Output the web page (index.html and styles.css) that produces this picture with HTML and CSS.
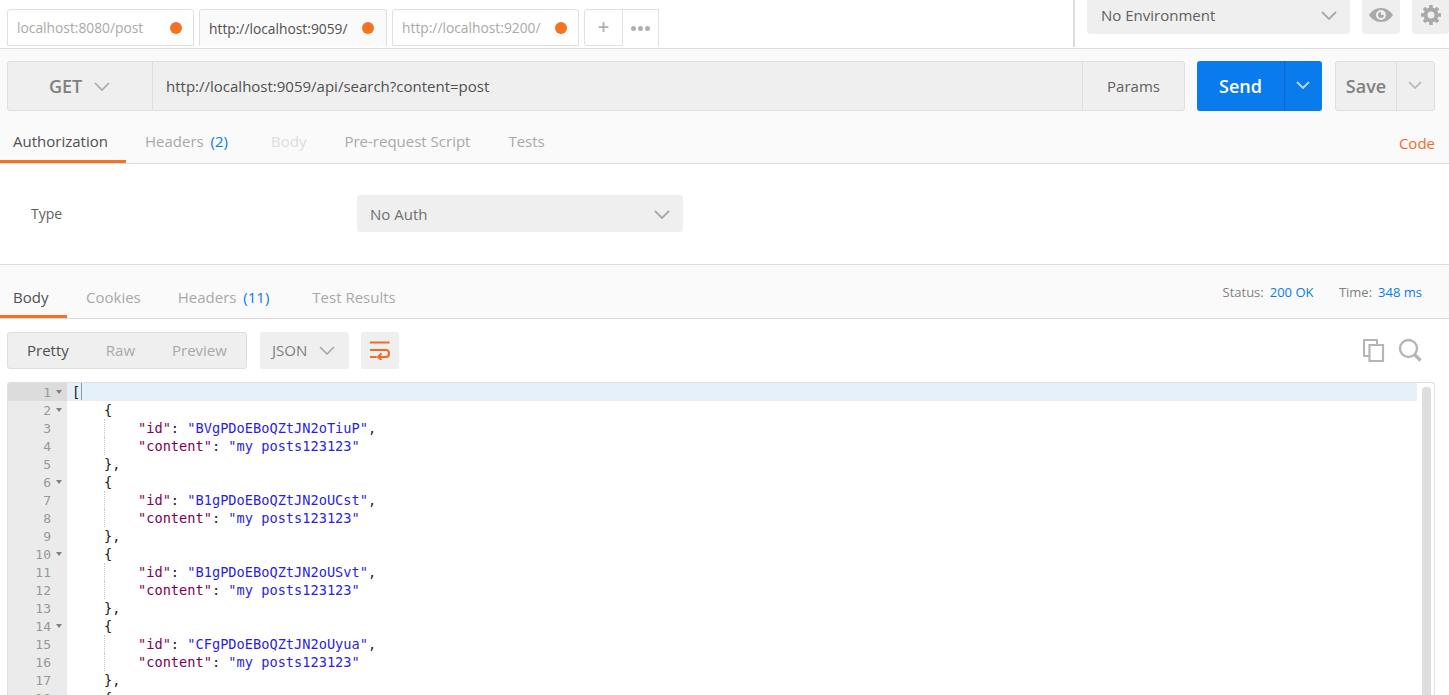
FILE: index.html
```html
<!DOCTYPE html>
<html lang="en">
<head>
<meta charset="utf-8">
<title>Postman</title>
<link rel="stylesheet" href="styles.css">
</head>
<body>
<header class="topbar">
  <div class="tabs">
    <div class="tab first"><span class="tab-label dim">localhost:8080/post</span><i class="dot"></i></div>
    <div class="tab active"><span class="tab-label">http://localhost:9059/</span><i class="dot"></i></div>
    <div class="tab"><span class="tab-label dim">http://localhost:9200/</span><i class="dot"></i></div>
    <div class="tab-actions">
      <div class="tab-add">+</div>
      <div class="tab-more"><i></i><i></i><i></i></div>
    </div>
  </div>
  <div class="env">
    <div class="env-select"><span>No Environment</span>
      <svg class="chev" width="16" height="9" viewBox="0 0 16 9"><path d="M1 1l7 7 7-7" fill="none" stroke="#a9a9a9" stroke-width="1.8"/></svg>
    </div>
    <div class="icon-btn eye">
      <svg width="26" height="16" viewBox="0 0 26 16"><path fill-rule="evenodd" d="M13 1C7.5 1 3 4.5 1 8c2 3.500 6.500 7 12 7s10-3.500 12-7c-2-3.500-6.500-7-12-7zm0 2a5 5 0 1 1 0 10 5 5 0 0 1 0-10z" fill="#a9a9a9"/><path fill-rule="evenodd" d="M13 5a3 3 0 1 0 3 3h-3z" fill="#a9a9a9"/></svg>
    </div>
    <div class="icon-btn gear">
      <svg width="22" height="22" viewBox="0 0 22 22"><circle cx="11" cy="11" r="5.500" fill="none" stroke="#a9a9a9" stroke-width="4"/><path d="M11 1v20M1 11h20M3.900 3.900l14.200 14.200M18.100 3.900L3.900 18.100" stroke="#a9a9a9" stroke-width="3.600" stroke-dasharray="4 12 4"/></svg>
    </div>
  </div>
</header>

<section class="request">
  <div class="url-row">
    <div class="url-box">
      <div class="method"><span>GET</span>
        <svg width="16" height="9" viewBox="0 0 16 9"><path d="M1 1l7 7 7-7" fill="none" stroke="#a9a9a9" stroke-width="1.700"/></svg>
      </div>
      <div class="url">http://localhost:9059/api/search?content=post</div>
      <div class="params">Params</div>
    </div>
    <div class="send">
      <span class="send-label">Send</span>
      <span class="send-arrow"><svg width="14" height="8" viewBox="0 0 14 8"><path d="M1 1l6 6 6-6" fill="none" stroke="#b9d4ee" stroke-width="1.900"/></svg></span>
    </div>
    <div class="save">
      <span class="save-label">Save</span>
      <span class="save-arrow"><svg width="14" height="8" viewBox="0 0 14 8"><path d="M1 1l6 6 6-6" fill="none" stroke="#b5b5b5" stroke-width="1.700"/></svg></span>
    </div>
  </div>
  <nav class="req-tabs">
    <span class="rt on">Authorization</span>
    <span class="rt">Headers <b>(2)</b></span>
    <span class="rt faint">Body</span>
    <span class="rt">Pre-request Script</span>
    <span class="rt">Tests</span>
    <span class="code-link">Code</span>
  </nav>
</section>

<section class="auth">
  <span class="auth-label">Type</span>
  <div class="auth-select"><span>No Auth</span>
    <svg width="16" height="9" viewBox="0 0 16 9"><path d="M1 1l7 7 7-7" fill="none" stroke="#a9a9a9" stroke-width="1.800"/></svg>
  </div>
</section>

<section class="res-head">
  <nav class="res-tabs">
    <span class="st on">Body</span>
    <span class="st">Cookies</span>
    <span class="st">Headers <b>(11)</b></span>
    <span class="st">Test Results</span>
  </nav>
  <div class="meta">
    <span class="k">Status:</span><span class="v">200 OK</span>
    <span class="k second">Time:</span><span class="v">348 ms</span>
  </div>
</section>

<section class="toolbar">
  <div class="segment"><span class="cur">Pretty</span><span>Raw</span><span>Preview</span></div>
  <div class="format"><span>JSON</span>
    <svg width="16" height="9" viewBox="0 0 16 9"><path d="M1 1l7 7 7-7" fill="none" stroke="#a9a9a9" stroke-width="1.700"/></svg>
  </div>
  <div class="wrap">
    <svg width="20" height="19" viewBox="0 0 20 19"><path d="M0 1.500h19.500M0 9h16c4 0 4 7 0 7H8M0 16h6.500" fill="none" stroke="#f26b26" stroke-width="2.100"/><path d="M11.500 12.500L8 16l3.500 3" fill="none" stroke="#f26b26" stroke-width="2"/></svg>
  </div>
  <div class="tools">
    <svg width="24" height="24" viewBox="0 0 24 24"><path d="M7 18H2V2h13v5" fill="none" stroke="#b5b5b5" stroke-width="2"/><path d="M7.500 7h13.500v16H7.500z" fill="none" stroke="#b5b5b5" stroke-width="2.200"/></svg>
    <svg width="24" height="24" viewBox="0 0 24 24"><circle cx="10.500" cy="10.500" r="8.500" fill="none" stroke="#b5b5b5" stroke-width="2.400"/><path d="M16.500 16.500l6 6" stroke="#b5b5b5" stroke-width="3.200"/></svg>
  </div>
</section>

<section class="editor">
  <div class="gutter">
    <div class="ln cur">1<i></i></div><div class="ln">2<i></i></div><div class="ln">3</div><div class="ln">4</div><div class="ln">5</div>
    <div class="ln">6<i></i></div><div class="ln">7</div><div class="ln">8</div><div class="ln">9</div><div class="ln">10<i></i></div>
    <div class="ln">11</div><div class="ln">12</div><div class="ln">13</div><div class="ln">14<i></i></div><div class="ln">15</div>
    <div class="ln">16</div><div class="ln">17</div><div class="ln">18</div>
  </div>
  <div class="lines">
    <div class="cl hl">[<span class="caret"></span></div>
    <div class="cl"><span class="ind1">{</span></div>
    <div class="cl guide"><span class="ind2"><em>"id"</em>: <u>"BVgPDoEBoQZtJN2oTiuP"</u>,</span></div>
    <div class="cl guide"><span class="ind2"><em>"content"</em>: <u>"my posts123123"</u></span></div>
    <div class="cl"><span class="ind1">},</span></div>
    <div class="cl"><span class="ind1">{</span></div>
    <div class="cl guide"><span class="ind2"><em>"id"</em>: <u>"B1gPDoEBoQZtJN2oUCst"</u>,</span></div>
    <div class="cl guide"><span class="ind2"><em>"content"</em>: <u>"my posts123123"</u></span></div>
    <div class="cl"><span class="ind1">},</span></div>
    <div class="cl"><span class="ind1">{</span></div>
    <div class="cl guide"><span class="ind2"><em>"id"</em>: <u>"B1gPDoEBoQZtJN2oUSvt"</u>,</span></div>
    <div class="cl guide"><span class="ind2"><em>"content"</em>: <u>"my posts123123"</u></span></div>
    <div class="cl"><span class="ind1">},</span></div>
    <div class="cl"><span class="ind1">{</span></div>
    <div class="cl guide"><span class="ind2"><em>"id"</em>: <u>"CFgPDoEBoQZtJN2oUyua"</u>,</span></div>
    <div class="cl guide"><span class="ind2"><em>"content"</em>: <u>"my posts123123"</u></span></div>
    <div class="cl"><span class="ind1">},</span></div>
    <div class="cl"><span class="ind1">{</span></div>
  </div>
  <div class="scroll"><i></i></div>
</section>
</body>
</html>
```
FILE: styles.css
```css
* { box-sizing: border-box; }
html, body { margin: 0; height: 695px; overflow: hidden; }
body { background: #fff; font-family: "Open Sans", "Liberation Sans", sans-serif; font-size: 15px; color: #808080; }

.topbar { height: 49px; border-bottom: 1px solid #dcdcdc; display: flex; justify-content: space-between; }
.tabs { display: flex; padding: 9px 0 0 7px; gap: 5px; align-items: flex-start; }
.tab { width: 187px; height: 37px; border: 1px solid #e0e0e0; border-radius: 3px 3px 0 0; display: flex; align-items: center; padding: 0 4px 0 9px; background: #fff; }
.tab.active { width: 188px; background: #fafafa; border-bottom: none; }
.tab-label { font-size: 13.800px; width: 139px; overflow: hidden; white-space: nowrap; color: #505050; margin-right: 14px; flex: none; }
.tab-label.dim { color: #a9a9a9; }
.dot { width: 12px; height: 12px; border-radius: 50%; background: #f47321; flex: none; }
.tab-actions { display: flex; }
.tab-add { width: 39px; height: 37px; border: 1px solid #e0e0e0; border-radius: 3px 0 0 3px; text-align: center; font-size: 20px; line-height: 34px; color: #b0b0b0; font-weight: 600; }
.tab-more { width: 36px; height: 37px; border: 1px solid #e0e0e0; border-left: none; border-bottom: none; display: flex; align-items: center; justify-content: center; gap: 2px; }
.tab-more i { width: 5px; height: 5px; border-radius: 50%; background: #b0b0b0; }

.env { display: flex; border-left: 2px solid #dcdcdc; height: 47px; padding-left: 12px; width: 376px; flex: none; align-items: flex-start; }
.env-select { width: 263px; height: 34px; background: #efefef; border-radius: 0 0 4px 4px; display: flex; align-items: center; justify-content: space-between; padding: 0 13px 4px 14px; color: #606060; }
.icon-btn { height: 34px; background: #efefef; border-radius: 0 0 4px 4px; display: flex; align-items: center; justify-content: center; }
.eye { width: 38px; margin-left: 12px; padding-bottom: 4px; }
.gear { width: 37px; margin-left: 12px; padding-bottom: 4px; }

.request { background: #fafafa; height: 115px; border-bottom: 1px solid #dcdcdc; }
.url-row { display: flex; padding: 12px 0 0 7px; height: 62px; }
.url-box { width: 1178px; height: 50px; border: 1px solid #dedede; border-radius: 3px; background: #efefef; display: flex; }
.method { width: 145px; border-right: 1px solid #dedede; display: flex; align-items: center; padding-left: 41px; gap: 12px; font-size: 18px; font-weight: 600; color: #808080; }
.url { flex: 1; padding-left: 13px; line-height: 48px; color: #505050; }
.params { width: 102px; border-left: 1px solid #dedede; text-align: center; line-height: 48px; color: #606060; }
.send { width: 125px; height: 50px; margin-left: 12px; background: #097bed; border-radius: 3px; display: flex; color: #fff; }
.send-label { width: 87px; text-align: center; line-height: 50px; font-size: 18px; font-weight: 600; }
.send-arrow { flex: 1; border-left: 1px solid #0265c8; display: flex; align-items: center; justify-content: center; padding: 0 2px 3px 0; }
.save { width: 100px; height: 50px; margin-left: 13px; border: 1px solid #dedede; border-radius: 3px; background: #efefef; display: flex; }
.save-label { width: 60px; text-align: center; line-height: 48px; font-size: 18px; font-weight: 600; color: #808080; }
.save-arrow { flex: 1; border-left: 1px solid #dedede; display: flex; align-items: center; justify-content: center; padding: 0 2px 3px 0; }

.req-tabs { display: flex; height: 52px; align-items: flex-start; }
.rt { height: 52px; padding: 19px 19px 0; color: #a9a9a9; line-height: 22px; }
.rt.on { width: 126px; padding: 19px 0 0 13px; color: #505050; border-bottom: 3px solid #f47321; }
.rt b { font-weight: 400; color: #097bed; margin: 0 5px 0 3px; }
.rt.faint { color: #dcdcdc; }
.code-link { margin-left: auto; margin-right: 14px; margin-top: 21px; color: #f26b26; line-height: 22px; }

.auth { height: 101px; border-bottom: 1px solid #dcdcdc; display: flex; padding: 31px 0 0 31px; align-items: flex-start; }
.auth-label { width: 326px; line-height: 38px; color: #606060; font-size: 14px; }
.auth-select { width: 326px; height: 37px; background: #efefef; border-radius: 3px; display: flex; align-items: center; justify-content: space-between; padding: 1px 13px 0; color: #707070; }

.res-head { height: 54px; background: #fafafa; border-bottom: 1px solid #dcdcdc; display: flex; justify-content: space-between; }
.res-tabs { display: flex; }
.st { height: 53px; padding: 21px 18px 0 19px; color: #a9a9a9; line-height: 22px; }
.st.on { width: 67px; padding: 21px 0 0 13px; color: #505050; border-bottom: 3px solid #f47321; }
.st b { font-weight: 400; color: #097bed; margin: 0 6px 0 3px; }
.meta { padding: 18px 27px 0 0; font-size: 13px; line-height: 18px; color: #808080; }
.meta .v { color: #097bed; margin-left: 6px; }
.meta .second { margin-left: 22px; }

.toolbar { height: 63px; display: flex; padding: 13px 0 0 7px; align-items: flex-start; }
.segment { width: 240px; height: 37px; border: 1px solid #dedede; border-radius: 3px; background: #efefef; display: flex; align-items: center; padding: 0 0 1px 19px; gap: 37px; color: #a9a9a9; }
.segment .cur { color: #505050; }
.format { width: 89px; height: 37px; margin-left: 13px; background: #efefef; border-radius: 3px; display: flex; align-items: center; padding: 0 0 1px 12px; gap: 12px; color: #808080; }
.wrap { width: 38px; height: 37px; margin-left: 12px; background: #efefef; border-radius: 3px; display: flex; align-items: center; justify-content: center; }
.tools { margin-left: auto; margin-right: 27px; display: flex; gap: 12px; padding: 6px 0 0; }

.editor { margin: 0 14px 0 7px; height: 320px; border: 1px solid #e0e0e0; border-bottom: none; border-radius: 3px 3px 0 0; display: flex; font-family: "DejaVu Sans Mono", "Liberation Mono", monospace; font-size: 13.650px; overflow: hidden; }
.gutter { width: 59px; background: #ebebeb; flex: none; color: #989898; }
.ln { height: 18px; line-height: 20px; padding-right: 16px; text-align: right; position: relative; font-size: 13px; }
.ln.cur { background: #dcdcdc; }
.ln i { position: absolute; right: 5px; top: 7px; width: 0; height: 0; border: 3.500px solid transparent; border-top: 4px solid #808080; border-bottom: none; }
.lines { flex: 1; min-width: 0; color: #202020; }
.cl { height: 18px; line-height: 18px; padding-left: 5px; white-space: pre; position: relative; }
.cl.hl { background: #e6f0fb; }
.caret { display: inline-block; width: 1px; height: 17px; background: #8899aa; vertical-align: top; margin-left: 1px; }
.ind1 { padding-left: 32px; }
.ind2 { padding-left: 66px; }
.guide::before { content: ""; position: absolute; left: 37px; top: 0; height: 18px; border-left: 1px dotted #c8c8c8; }
em { font-style: normal; color: #800055; }
u { text-decoration: none; color: #2a1fe0; }
.scroll { width: 17px; flex: none; padding: 4px 3px 0 5px; }
.scroll i { display: block; width: 9px; height: 330px; background: #dedede; border-radius: 4px; }
```
